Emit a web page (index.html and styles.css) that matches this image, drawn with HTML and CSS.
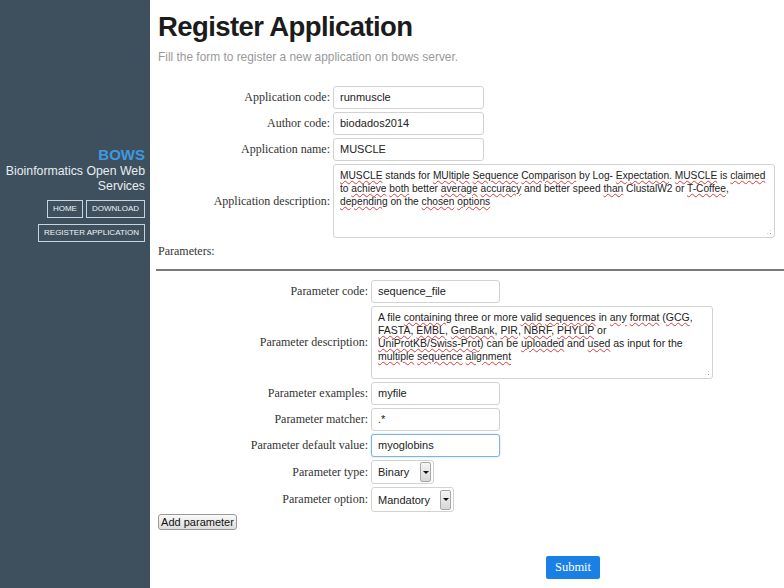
FILE: index.html
```html
<!DOCTYPE html>
<html>
<head>
<meta charset="utf-8">
<link rel="stylesheet" href="styles.css">
</head>
<body>
<div class="page">
  <aside class="sidebar">
    <div class="brand">BOWS</div>
    <div class="tagline">Bioinformatics Open Web<br>Services</div>
    <div class="navrow">
      <a class="navbtn">HOME</a>
      <a class="navbtn">DOWNLOAD</a>
    </div>
    <div class="navrow">
      <a class="navbtn">REGISTER APPLICATION</a>
    </div>
  </aside>
  <main class="main">
    <h1 class="title">Register Application</h1>
    <p class="subtitle">Fill the form to register a new application on bows server.</p>

    <div class="form app-form">
      <label class="lbl">Application code:</label>
      <div class="input w-app">runmuscle</div>
      <label class="lbl">Author code:</label>
      <div class="input w-app">biodados2014</div>
      <label class="lbl">Application name:</label>
      <div class="input w-app">MUSCLE</div>
      <label class="lbl">Application description:</label>
      <div class="textarea ta-app"><span class="sp">MUSCLE</span> stands for <span class="sp">MUltiple</span> <span class="sp">Sequence</span> <span class="sp">Comparison</span> by Log- <span class="sp">Expectation</span>. <span class="sp">MUSCLE</span> is <span class="sp">claimed</span><br>to <span class="sp">achieve</span> <span class="sp">both</span> better <span class="sp">average</span> <span class="sp">accuracy</span> and better speed <span class="sp">than</span> ClustalW2 or <span class="sp">T-Coffee</span>,<br><span class="sp">depending</span> on the <span class="sp">chosen</span> <span class="sp">options</span><span class="grip"></span></div>
    </div>

    <div class="section-label">Parameters:</div>
    <hr class="rule">

    <div class="form param-form">
      <label class="lbl">Parameter code:</label>
      <div class="input w-par">sequence_file</div>
      <label class="lbl">Parameter description:</label>
      <div class="textarea ta-par">A file <span class="sp">containing</span> three or more <span class="sp">valid</span> <span class="sp">sequences</span> in <span class="sp">any</span> <span class="sp">format</span> (<span class="sp">GCG</span>,<br><span class="sp">FASTA</span>, <span class="sp">EMBL</span>, <span class="sp">GenBank</span>, <span class="sp">PIR</span>, <span class="sp">NBRF</span>, <span class="sp">PHYLIP</span> or<br><span class="sp">UniProtKB/Swiss-Prot</span>) can be <span class="sp">uploaded</span> and <span class="sp">used</span> as input for the<br><span class="sp">multiple</span> <span class="sp">sequence</span> <span class="sp">alignment</span><span class="grip"></span></div>
      <label class="lbl">Parameter examples:</label>
      <div class="input w-par">myfile</div>
      <label class="lbl">Parameter matcher:</label>
      <div class="input w-par">.*</div>
      <label class="lbl">Parameter default value:</label>
      <div class="input w-par focused">myoglobins</div>
      <label class="lbl">Parameter type:</label>
      <div class="select sel-type"><span class="sel-text">Binary</span><span class="sel-btn"><span class="arrow"></span></span></div>
      <label class="lbl">Parameter option:</label>
      <div class="select sel-opt"><span class="sel-text">Mandatory</span><span class="sel-btn"><span class="arrow"></span></span></div>
    </div>

    <button class="addbtn">Add parameter</button>

    <div class="submit-row">
      <button class="submit">Submit</button>
    </div>
  </main>
</div>
</body>
</html>
```

FILE: styles.css
```css
html, body {
  margin: 0;
  padding: 0;
  background: #fff;
}
.page {
  display: flex;
  width: 784px;
  height: 588px;
  overflow: hidden;
}
.sidebar {
  width: 150px;
  flex: 0 0 150px;
  background: #3e4f5e;
  box-sizing: border-box;
  padding: 146px 5px 0 0;
  display: flex;
  flex-direction: column;
  align-items: flex-end;
  font-family: "Liberation Sans", Arial, sans-serif;
}
.brand {
  color: #3d9ae0;
  font-weight: bold;
  font-size: 15px;
  line-height: 18px;
}
.tagline {
  color: #e8edf1;
  font-size: 12.3px;
  line-height: 15px;
  text-align: right;
}
.navrow {
  display: flex;
  gap: 3px;
  margin-top: 6px;
}
.navrow + .navrow {
  margin-top: 6px;
}
.navbtn {
  display: block;
  border: 1px solid #c9d3db;
  color: #f0f3f5;
  font-size: 8px;
  line-height: 16px;
  padding: 0 5px;
  letter-spacing: 0;
}
.main {
  flex: 1;
  padding: 0 0 0 8px;
  font-family: "Liberation Serif", "Times New Roman", serif;
  font-size: 12px;
  color: #333;
}
.title {
  font-family: "Liberation Sans", Arial, sans-serif;
  font-weight: bold;
  font-size: 27.5px;
  letter-spacing: -0.6px;
  color: #1b1b1b;
  margin: 10px 0 0 0;
  line-height: 33px;
}
.subtitle {
  font-family: "Liberation Sans", Arial, sans-serif;
  color: #999;
  font-size: 11.9px;
  margin: 7px 0 0 0;
  line-height: 15px;
}
.form {
  display: grid;
  column-gap: 3px;
  row-gap: 3px;
  align-items: center;
}
.app-form {
  grid-template-columns: 172px auto;
  margin-top: 21px;
}
.param-form {
  grid-template-columns: 210px auto;
  margin-top: 9px;
}
.lbl {
  text-align: right;
  color: #333;
  font-size: 12px;
}
.input, .textarea, .select {
  box-sizing: border-box;
  border: 1px solid #d2d2d2;
  border-radius: 3px;
  background: #fff;
  font-family: "Liberation Sans", Arial, sans-serif;
  font-size: 11px;
  color: #222;
}
.input {
  height: 23px;
  line-height: 21px;
  padding: 0 6px;
}
.w-app { width: 151px; }
.w-par { width: 129px; }
.focused {
  border-color: #7fb4e2;
  box-shadow: 0 0 2px #a9cff0;
}
.textarea {
  position: relative;
  padding: 4px 6px;
  line-height: 13px;
  white-space: nowrap;
}
.ta-app { width: 442px; height: 74px; font-size: 10.2px; }
.ta-par { width: 342px; height: 73px; font-size: 10.5px; }
.sp {
  text-decoration-line: underline;
  text-decoration-style: wavy;
  text-decoration-color: #e0393a;
  text-decoration-thickness: 1px;
  text-underline-offset: 1px;
}
.grip {
  position: absolute;
  right: 2px;
  bottom: 2px;
  width: 6px;
  height: 6px;
  background:
    radial-gradient(circle, #999 0.7px, transparent 1px) 0 0 / 3px 3px;
  clip-path: polygon(100% 0, 100% 100%, 0 100%);
}
.select {
  display: flex;
  align-items: center;
  justify-content: space-between;
  padding: 0 2px 0 6px;
}
.sel-type { width: 63px; height: 24px; }
.sel-opt { width: 83px; height: 25px; }
.sel-btn {
  box-sizing: border-box;
  width: 11px;
  height: 20px;
  border: 1px solid #a8a8a8;
  border-radius: 2px;
  background: linear-gradient(#f4f4f4, #d8d8d8);
  display: flex;
  align-items: center;
  justify-content: center;
}
.arrow {
  width: 0;
  height: 0;
  border-left: 3px solid transparent;
  border-right: 3px solid transparent;
  border-top: 3px solid #111;
}
.section-label {
  margin-top: 6px;
  line-height: 15px;
  color: #333;
}
.rule {
  border: 0;
  border-top: 2px solid #7a7a7a;
  margin: 10px 0 0 -2px;
}
.addbtn {
  display: block;
  margin-top: 2px;
  box-sizing: border-box;
  width: 79px;
  height: 16px;
  padding: 0;
  font-family: "Liberation Sans", Arial, sans-serif;
  font-size: 11px;
  color: #111;
  border: 1px solid #9a9a9a;
  border-radius: 3px;
  background: linear-gradient(#fafafa, #dcdcdc);
}
.submit-row {
  display: flex;
  padding-left: 388px;
  margin-top: 26px;
}
.submit {
  box-sizing: border-box;
  width: 54px;
  height: 23px;
  border: 0;
  border-radius: 2px;
  background: #1a80e6;
  color: #fff;
  font-family: "Liberation Serif", "Times New Roman", serif;
  font-size: 12.5px;
  padding: 0;
}
```
